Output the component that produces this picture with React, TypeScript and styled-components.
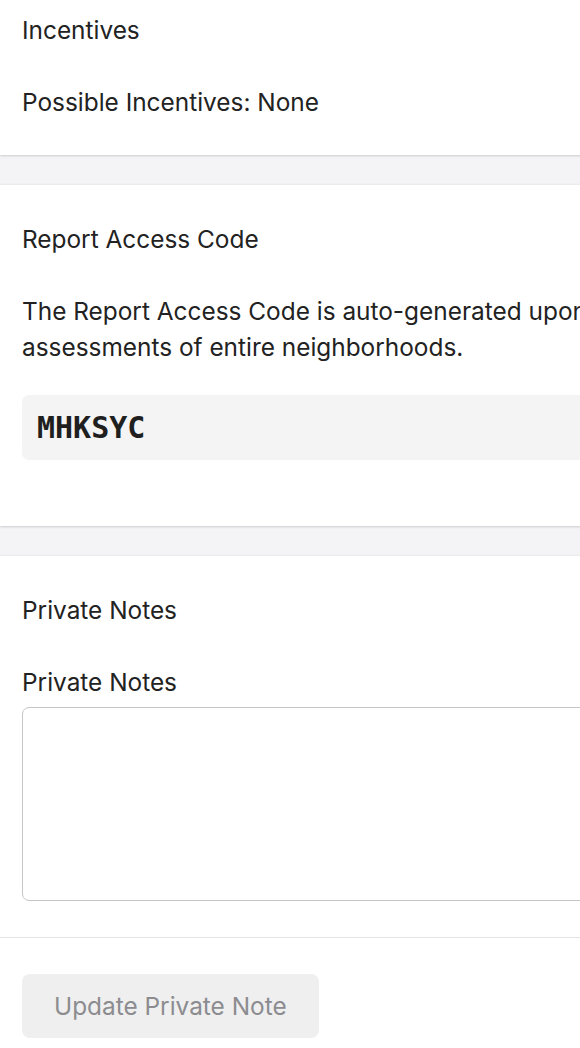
import styled, { createGlobalStyle } from 'styled-components';

const GlobalStyle = createGlobalStyle`
  html, body {
    margin: 0;
    padding: 0;
    background: #f4f4f6;
    overflow: hidden;
  }

  body {
    font-family: Inter, "Noto Sans", "Liberation Sans", sans-serif;
    color: #222;
    -webkit-font-smoothing: antialiased;
  }
`;

const Page = styled.div`
  width: 820px;
  display: flex;
  flex-direction: column;
  gap: 29px;
  margin-top: -25px;
`;

const Card = styled.section`
  background: #fff;
  box-shadow: 0 1px 2px rgba(0, 0, 0, 0.16);
  border-top: 1px solid #ececec;
`;

const CardBody = styled.div<{ $bottom?: number }>`
  padding: 38px 22px ${(p) => p.$bottom ?? 37}px;
`;

const Title = styled.h2<{ $gap?: number }>`
  margin: 0 0 ${(p) => p.$gap ?? 39}px;
  font-size: 24.4px;
  font-weight: 400;
  line-height: 33px;
`;

const Text = styled.p`
  margin: 0;
  font-size: 24.4px;
  line-height: 36px;
`;

const CodeBox = styled.div`
  margin-top: 30px;
  margin-bottom: 29px;
  height: 65px;
  display: flex;
  align-items: center;
  padding: 0 15px;
  background: #f4f4f4;
  border-radius: 7px;
  font-family: "DejaVu Sans Mono", "Liberation Mono", monospace;
  font-weight: 700;
  font-size: 30px;
  color: #1f1f1f;
`;

const Label = styled.label`
  display: block;
  font-size: 24.4px;
  line-height: 33px;
  margin-bottom: 8px;
`;

const NoteArea = styled.textarea`
  display: block;
  box-sizing: border-box;
  width: 100%;
  height: 194px;
  border: 1px solid #c6c6c8;
  border-radius: 7px;
  resize: none;
  font: inherit;
  outline: none;
`;

const Footer = styled.div`
  border-top: 1px solid #e4e4e6;
  padding: 36px 22px 30px;
`;

const Button = styled.button`
  height: 64px;
  padding: 0 32px;
  border: none;
  border-radius: 8px;
  background: #efefef;
  color: #8c8c90;
  font-family: Inter, "Noto Sans", "Liberation Sans", sans-serif;
  font-size: 24.4px;
`;

export default function App() {
  return (
    <>
      <GlobalStyle />
      <Page>
        <Card>
          <CardBody $bottom={35}>
            <Title $gap={37}>Incentives</Title>
            <Text>Possible Incentives: None</Text>
          </CardBody>
        </Card>

        <Card>
          <CardBody>
            <Title $gap={37}>Report Access Code</Title>
            <Text>
              The Report Access Code is auto-generated upon request for
              <br />
              assessments of entire neighborhoods.
            </Text>
            <CodeBox>MHKSYC</CodeBox>
          </CardBody>
        </Card>

        <Card>
          <CardBody $bottom={36}>
            <Title>Private Notes</Title>
            <Label htmlFor="private-notes">Private Notes</Label>
            <NoteArea id="private-notes" />
          </CardBody>
          <Footer>
            <Button disabled>Update Private Note</Button>
          </Footer>
        </Card>
      </Page>
    </>
  );
}
